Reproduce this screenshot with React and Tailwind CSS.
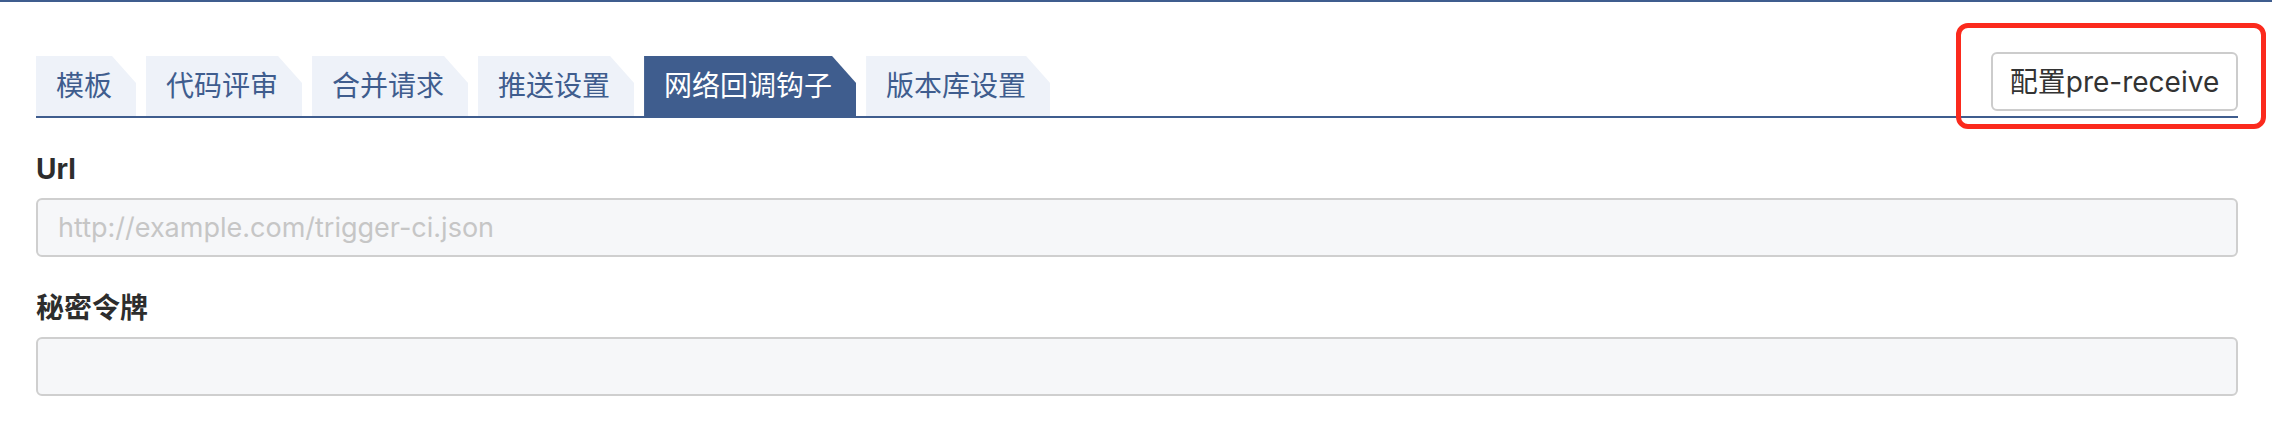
import React from "react";

const tabs = ["模板", "代码评审", "合并请求", "推送设置", "网络回调钩子", "版本库设置"];
const ACTIVE = 4;

export default function App() {
  return (
    <div
      className="w-full h-[422px] bg-white overflow-hidden border-t-2 border-[#3f5d8e]"
      style={{ fontFamily: '"Inter","Noto Sans CJK SC",sans-serif' }}
    >
      <div className="pl-[36px] pr-[34px]">
        <div className="flex justify-between items-end pt-[50px] border-b-2 border-[#3f5d8e]">
          <ul className="flex items-end gap-[10px]">
            {tabs.map((t, i) => (
              <li
                key={t}
                className={
                  "h-[60px] flex items-center pl-5 pr-6 text-[28px] leading-[40px] [clip-path:polygon(0_0,calc(100%-24px)_0,100%_27px,100%_100%,0_100%)] " +
                  (i === ACTIVE
                    ? "bg-[#3f5d8e] text-white"
                    : "bg-[#eef2f9] text-[#3f5d8e]")
                }
              >
                {t}
              </li>
            ))}
          </ul>
          <div className="relative mb-[5px]">
            <button className="w-[247px] h-[59px] flex items-center justify-center border-2 border-[#cccccc] rounded-[6px] bg-white text-[#333333] text-[28px] leading-[40px]">
              配置pre-receive
            </button>
            <div className="absolute -left-[35px] -top-[29px] -right-[28px] -bottom-[18px] border-[5px] border-[#fb2a1d] rounded-[12px] pointer-events-none" />
          </div>
        </div>

        <div>
          <label className="block pt-[31px] pb-[9px] text-[28px] leading-[40px] font-bold text-[#2d2d2d]">
            Url
          </label>
          <input
            className="w-full h-[59px] px-5 border-2 border-[#cfcfcf] rounded-[6px] bg-[#f6f7f9] text-[27px] text-[#333333] placeholder:text-[#c6c6c6] outline-none"
            placeholder="http://example.com/trigger-ci.json"
          />
        </div>
        <div>
          <label className="block pt-[31px] pb-[9px] text-[28px] leading-[40px] font-bold text-[#2d2d2d]">
            秘密令牌
          </label>
          <input
            className="w-full h-[59px] px-5 border-2 border-[#cfcfcf] rounded-[6px] bg-[#f6f7f9] text-[27px] text-[#333333] outline-none"
          />
        </div>
      </div>
    </div>
  );
}
